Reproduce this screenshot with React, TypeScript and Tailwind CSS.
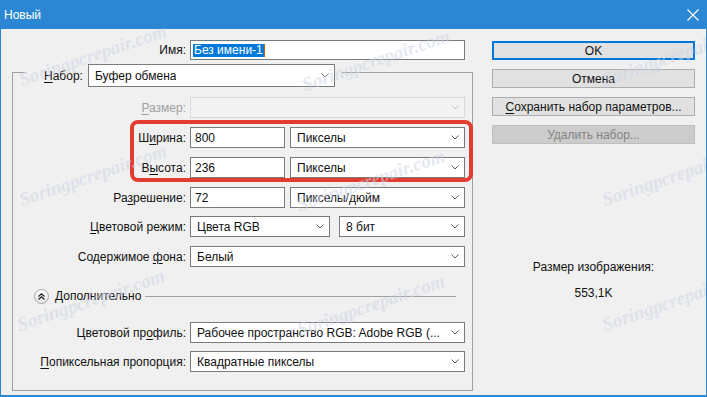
import React from 'react';

const font = "font-['Liberation_Sans',Arial,sans-serif]";

const Chevron: React.FC<{ disabled?: boolean }> = ({ disabled }) => (
  <svg width="8" height="5" viewBox="0 0 8 5" className="shrink-0">
    <polyline
      points="0.5,0.5 4,4 7.5,0.5"
      fill="none"
      stroke={disabled ? '#c4c4c4' : '#5a5a5a'}
      strokeWidth="1"
    />
  </svg>
);

const Select: React.FC<{ value?: string; width: string; disabled?: boolean; height?: string }> = ({
  value,
  width,
  disabled,
  height = 'h-[21px]'
}) => (
  <div
    className={`${width} ${height} flex items-center justify-between pl-[6px] pr-[5px] border ${
      disabled ? 'border-[#d9d9d9] bg-[#f3f3f3]' : 'border-[#7a7a7a] bg-white'
    }`}
  >
    <span className="truncate text-[#111]">{value}</span>
    <Chevron disabled={disabled} />
  </div>
);

const Input: React.FC<{ value: string; width: string }> = ({ value, width }) => (
  <div className={`${width} h-[21px] flex items-center pl-[4px] border border-[#7a7a7a] bg-white text-[#111]`}>
    {value}
  </div>
);

const Row: React.FC<{ label: React.ReactNode; disabled?: boolean; className?: string; children: React.ReactNode }> = ({
  label,
  disabled,
  className = '',
  children
}) => (
  <div className={`flex items-center ${className}`}>
    <div className={`w-[173px] text-right whitespace-nowrap ${disabled ? 'text-[#a0a0a0]' : 'text-[#111]'}`}>
      {label}
    </div>
    <div className="ml-[4px] flex gap-[5px]">{children}</div>
  </div>
);

const Btn: React.FC<{ children: React.ReactNode; primary?: boolean; disabled?: boolean }> = ({
  children,
  primary,
  disabled
}) => (
  <div
    className={`w-[203px] h-[19px] flex items-center justify-center ${
      primary
        ? 'border-2 border-[#0078d7] bg-[#e1e1e1] text-[#111]'
        : disabled
        ? 'border border-[#bfbfbf] bg-[#cccccc] text-[#838383]'
        : 'border border-[#adadad] bg-[#e1e1e1] text-[#111]'
    }`}
  >
    {children}
  </div>
);

// faint site watermark tiled over the dialog
const marks = [
  { left: 'left-[22px]', top: 'top-[70px]' },
  { left: 'left-[305px]', top: 'top-[75px]' },
  { left: 'left-[605px]', top: 'top-[70px]' },
  { left: 'left-[22px]', top: 'top-[190px]' },
  { left: 'left-[300px]', top: 'top-[195px]' },
  { left: 'left-[605px]', top: 'top-[190px]' },
  { left: 'left-[20px]', top: 'top-[315px]' },
  { left: 'left-[300px]', top: 'top-[320px]' },
  { left: 'left-[605px]', top: 'top-[315px]' }
];

export default function App() {
  return (
    <div className={`relative w-[707px] h-[397px] overflow-hidden bg-[#f0f0f0] border-x border-b-2 border-[#2b87d3] text-[12px] ${font}`}>
      {/* title bar */}
      <div className="h-[29px] bg-[#2b87d3] flex items-center justify-between pl-[3px] pr-[7px] text-white">
        <span className="text-[12px]">Новый</span>
        <svg width="12" height="12" viewBox="0 0 12 12">
          <path d="M0.5 0.5 L11.5 11.5 M11.5 0.5 L0.5 11.5" stroke="#fff" strokeWidth="1.1" />
        </svg>
      </div>

      <div className="flex">
        {/* left column */}
        <div className="w-[475px]">
          <div className="flex items-center mt-[11px]">
            <div className="w-[185px] text-right text-[#111]">Имя:</div>
            <div className="ml-[4px] w-[275px] h-[20px] flex items-center pl-[2px] border border-[#7a7a7a] bg-white">
              <span className="bg-[#0078d7] text-white px-[1px] leading-[13px]">Без имени-1</span>
              <span className="w-[1px] h-[13px] bg-[#c86400]" />
            </div>
          </div>

          <div className="ml-[11px] mt-[12px] w-[461px] h-[319px] border border-[#a0a0a0]">
            <div className="-mt-[9px] ml-[13px] w-fit flex items-center pl-[18px] pr-[7px] bg-[#f0f0f0]">
              <span className="text-[#111] mr-[5px]">
                <u className="underline-offset-2">Н</u>абор:
              </span>
              <Select value="Буфер обмена" width="w-[247px]" height="h-[23px]" />
            </div>

            <Row
              className="mt-[10px]"
              disabled
              label={
                <>
                  <u className="underline-offset-2">Р</u>азмер:
                </>
              }
            >
              <Select width="w-[275px]" disabled />
            </Row>
            <Row
              className="mt-[9px]"
              label={
                <>
                  Ш<u className="underline-offset-2">и</u>рина:
                </>
              }
            >
              <Input value="800" width="w-[95px]" />
              <Select value="Пикселы" width="w-[175px]" />
            </Row>
            <Row
              className="mt-[9px]"
              label={
                <>
                  В<u className="underline-offset-2">ы</u>сота:
                </>
              }
            >
              <Input value="236" width="w-[95px]" />
              <Select value="Пикселы" width="w-[175px]" />
            </Row>
            <Row
              className="mt-[9px]"
              label={
                <>
                  Ра<u className="underline-offset-2">з</u>решение:
                </>
              }
            >
              <Input value="72" width="w-[95px]" />
              <Select value="Пикселы/дюйм" width="w-[175px]" />
            </Row>
            <Row
              className="mt-[8px]"
              label={
                <>
                  <u className="underline-offset-2">Ц</u>ветовой режим:
                </>
              }
            >
              <Select value="Цвета RGB" width="w-[140px]" />
              <div className="ml-[4px]">
                <Select value="8 бит" width="w-[126px]" />
              </div>
            </Row>
            <Row
              className="mt-[9px]"
              label={
                <>
                  Содержимое <u className="underline-offset-2">ф</u>она:
                </>
              }
            >
              <Select value="Белый" width="w-[275px]" />
            </Row>

            <div className="flex items-center mt-[20px] ml-[21px] mr-[16px]">
              <div className="w-[15px] h-[15px] rounded-full border border-[#a8a8a8] bg-gradient-to-b from-white to-[#e4e4e4] flex items-center justify-center">
                <svg width="7" height="7" viewBox="0 0 7 7">
                  <path d="M0.5 3.5 L3.5 0.8 L6.5 3.5 M0.5 6.5 L3.5 3.8 L6.5 6.5" fill="none" stroke="#222" strokeWidth="1.2" />
                </svg>
              </div>
              <span className="ml-[6px] text-[#111]">Дополнительно</span>
              <div className="flex-1 ml-[4px] h-px bg-[#a0a0a0]" />
            </div>

            <Row
              className="mt-[17px]"
              label={
                <>
                  Цветовой пр<u className="underline-offset-2">о</u>филь:
                </>
              }
            >
              <Select value="Рабочее пространство RGB:  Adobe RGB (..." width="w-[275px]" />
            </Row>
            <Row
              className="mt-[8px]"
              label={
                <>
                  <u className="underline-offset-2">П</u>опиксельная пропорция:
                </>
              }
            >
              <Select value="Квадратные пикселы" width="w-[275px]" />
            </Row>
          </div>
        </div>

        {/* right column */}
        <div className="ml-[16px] w-[203px] pt-[12px] flex flex-col gap-[9px]">
          <Btn primary>OK</Btn>
          <Btn>Отмена</Btn>
          <Btn>
            <span>
              <u className="underline-offset-2">С</u>охранить набор параметров...
            </span>
          </Btn>
          <Btn disabled>Удалить набор...</Btn>
          <div className="mt-[107px] text-center text-[#111] leading-[15px]">Размер изображения:</div>
          <div className="mt-[2px] text-center text-[#111] leading-[15px]">553,1K</div>
        </div>
      </div>

      {/* red annotation */}
      <div className="absolute left-[129px] top-[120px] w-[343px] h-[62px] border-[4px] border-[#e23b30] rounded-[8px] pointer-events-none" />

      {marks.map((m, i) => (
        <span
          key={i}
          className={`absolute ${m.left} ${m.top} origin-bottom-left -rotate-[19deg] whitespace-nowrap leading-[20px] text-[19px] italic font-bold font-['Liberation_Serif',serif] text-[#cdd4e6] opacity-50 pointer-events-none`}
        >
          Soringpcrepair.com
        </span>
      ))}
    </div>
  );
}
